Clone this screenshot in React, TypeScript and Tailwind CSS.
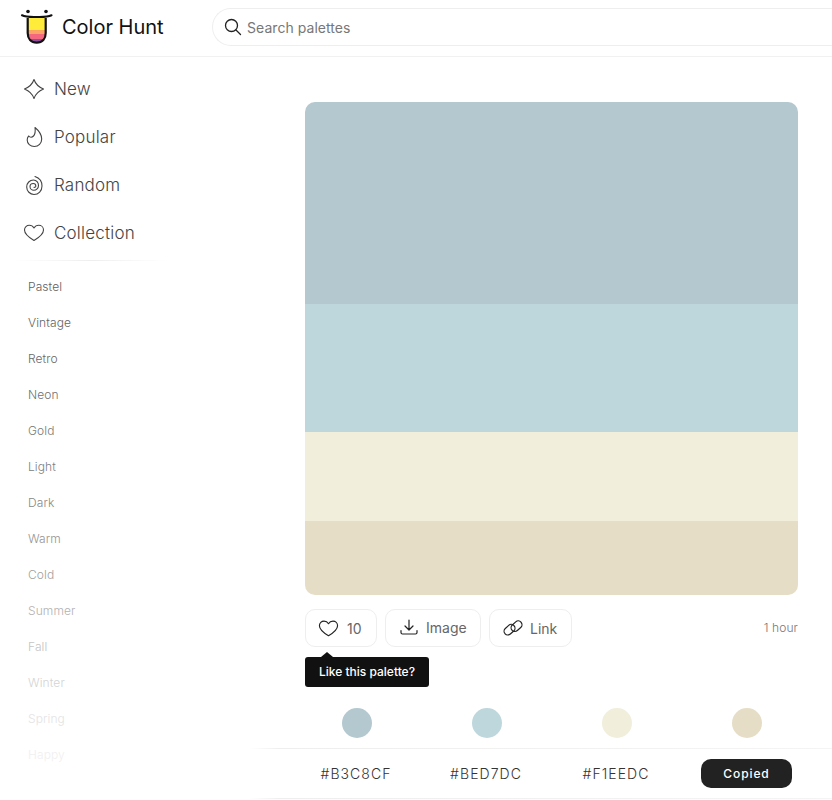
import React from "react";

const Logo = () => (
  <svg width="34" height="36" viewBox="0 0 34 36" fill="none">
    <defs>
      <clipPath id="cup"><path d="M7.700 9 H25.700 V24 C25.700 30 22.400 33.700 16.700 33.700 C11 33.700 7.700 30 7.700 24 Z" /></clipPath>
    </defs>
    <g clipPath="url(#cup)">
      <rect x="5" y="9" width="24" height="12" fill="#ffec3a" />
      <rect x="5" y="21" width="24" height="4" fill="#fda564" />
      <rect x="5" y="25" width="24" height="5" fill="#f4677f" />
      <rect x="5" y="30" width="24" height="5" fill="#8b4fa0" />
    </g>
    <path d="M7.700 9 V24 C7.700 30 11 33.700 16.700 33.700 C22.400 33.700 25.700 30 25.700 24 V9" stroke="#111111" strokeWidth="2.200" />
    <path d="M2 6.300 C6 8.300 10 8 16.700 8 C23.400 8 27.500 8.300 31.500 6.300" stroke="#111111" strokeWidth="2.200" strokeLinecap="round" />
    <circle cx="8" cy="2.500" r="1.800" fill="#111111" />
    <circle cx="26" cy="2.500" r="1.800" fill="#111111" />
  </svg>
);

const Star = () => (
  <svg width="22" height="22" viewBox="0 0 22 22" fill="none" stroke="#444444" strokeWidth="1.100" strokeLinejoin="round">
    <path d="M11 1.500 C12.500 6 15.500 9 20.500 11 C15.500 13 12.500 16 11 20.500 C9.500 16 6.500 13 1.500 11 C6.500 9 9.500 6 11 1.500 Z" />
  </svg>
);
const Flame = () => (
  <svg width="22" height="22" viewBox="0 0 22 22" fill="none" stroke="#444444" strokeWidth="1.100" strokeLinecap="round" strokeLinejoin="round">
    <path d="M12 1.500 C15 4 18.700 8 18.700 13 C18.700 17.500 15.500 20.500 11.300 20.500 C7.300 20.500 4.200 17.700 4.200 14 C4.200 12.500 4.700 11 5.700 10 C7 11.700 9 11.500 10.500 10 C12 8.500 12.500 5 12 1.500 Z" />
  </svg>
);
const Spiral = () => (
  <svg width="22" height="22" viewBox="0 0 22 22" fill="none" stroke="#444444" strokeWidth="1.100" strokeLinecap="round">
    <path d="M12 2.500 C16.500 4 19 8 19 12 C19 17 15.500 20.500 11 20.500 C7 20.500 3.700 17 3.700 13 C3.700 9 6.700 6 10.500 6 C13.500 6 15.500 8.700 15.500 11.500 C15.500 14.200 13.300 16.300 10.800 16.300 C8.700 16.300 7 14.500 7 12.500 C7 10.700 8.500 9.500 10.300 9.500 C11.800 9.500 12.800 10.700 12.800 12 C12.800 13 12 13.500 11 13.300" />
  </svg>
);
const Heart = ({ size = 22, color = "#444444", sw = 1.100 }: { size?: number; color?: string; sw?: number }) => (
  <svg width={size} height={size} viewBox="0 0 22 22" fill="none" stroke={color} strokeWidth={sw} strokeLinejoin="round">
    <path d="M11 18.500 C6 15.500 1.500 12 1.500 8 C1.500 5.200 3.700 3.300 6.300 3.300 C8.300 3.300 10 4.300 11 6 C12 4.300 13.700 3.300 15.700 3.300 C18.300 3.300 20.500 5.200 20.500 8 C20.500 12 16 15.500 11 18.500 Z" />
  </svg>
);
const Download = () => (
  <svg width="18" height="18" viewBox="0 0 18 18" fill="none" stroke="#222222" strokeWidth="1.200" strokeLinecap="round" strokeLinejoin="round">
    <path d="M9 1 V10.500 M5 7 L9 11 L13 7" />
    <path d="M1 11.500 V13.500 C1 14.500 1.500 15 2.500 15 H15.500 C16.500 15 17 14.500 17 13.500 V11.500" />
  </svg>
);
const Chain = () => (
  <svg width="20" height="20" viewBox="0 0 20 20" fill="none" stroke="#222222" strokeWidth="1.200">
    <rect x="0.500" y="8" width="12" height="7.500" rx="3.700" transform="rotate(-42 6.500 11.700)" />
    <rect x="7.500" y="4.500" width="12" height="7.500" rx="3.700" transform="rotate(-42 13.500 8.200)" />
  </svg>
);
const SearchIcon = () => (
  <svg width="18" height="18" viewBox="0 0 18 18" fill="none" stroke="#222222" strokeWidth="1.300" strokeLinecap="round">
    <circle cx="7.500" cy="7.500" r="6" />
    <path d="M12 12 L16.500 16.500" />
  </svg>
);

const nav = [
  { label: "New", icon: <Star /> },
  { label: "Popular", icon: <Flame /> },
  { label: "Random", icon: <Spiral /> },
  { label: "Collection", icon: <Heart /> },
];

const tags = [
  { label: "Pastel", cls: "text-[#606060]" },
  { label: "Vintage", cls: "text-[#646464]" },
  { label: "Retro", cls: "text-[#686868]" },
  { label: "Neon", cls: "text-[#707070]" },
  { label: "Gold", cls: "text-[#787878]" },
  { label: "Light", cls: "text-[#808080]" },
  { label: "Dark", cls: "text-[#888888]" },
  { label: "Warm", cls: "text-[#949494]" },
  { label: "Cold", cls: "text-[#a0a0a0]" },
  { label: "Summer", cls: "text-[#b2b2b2]" },
  { label: "Fall", cls: "text-[#c4c4c4]" },
  { label: "Winter", cls: "text-[#d4d4d4]" },
  { label: "Spring", cls: "text-[#e4e4e4]" },
  { label: "Happy", cls: "text-[#f0f0f0]" },
];

const swatches = [
  { hex: "#B3C8CF", cls: "bg-[#b3c8cf]" },
  { hex: "#BED7DC", cls: "bg-[#bed7dc]" },
  { hex: "#F1EEDC", cls: "bg-[#f1eedc]" },
  { hex: "#E5DDC5", cls: "bg-[#e5ddc5]" },
];

const btn = "flex h-[38px] items-center rounded-[10px] border border-[#eeeeee] bg-white text-[14px] text-[#666666]";

export default function App() {
  return (
    <div className="flex h-[800px] w-[832px] flex-col overflow-hidden bg-white font-['Inter',sans-serif]">
      <header className="flex h-[57px] shrink-0 items-center border-b border-[#f1f1f1]">
        <div className="mb-[3px] ml-[20px]"><Logo /></div>
        <span className="mb-[2px] ml-[8px] w-[150px] text-[20px] text-[#111111]">Color Hunt</span>
        <div className="mb-[2px] flex h-[38px] flex-1 items-center rounded-l-full border border-r-0 border-[#eeeeee] pl-[11px]">
          <SearchIcon />
          <span className="ml-[5px] text-[14px] tracking-[0.050px] text-[#777777]">Search palettes</span>
        </div>
      </header>

      <div className="flex min-h-0 flex-1">
        <aside className="w-[250px] shrink-0 pt-[8px]">
          <nav className="flex flex-col">
            {nav.map((n) => (
              <div key={n.label} className="flex h-[48px] items-center pl-[23px]">
                {n.icon}
                <span className="ml-[9px] mt-[2px] text-[17px] font-light tracking-[0.200px] text-[#444444]">{n.label}</span>
              </div>
            ))}
          </nav>
          <div className="ml-[15px] mt-[3px] h-px w-[152px] bg-gradient-to-r from-transparent via-[#eeeeee] to-transparent" />
          <ul className="mt-[8px] flex flex-col">
            {tags.map((t) => (
              <li key={t.label} className={`flex h-[36px] items-center pl-[28px] text-[12px] font-light tracking-[0.100px] ${t.cls}`}>{t.label}</li>
            ))}
          </ul>
        </aside>

        <main className="flex min-w-0 flex-1 flex-col">
          <div className="ml-[55px] mt-[45px] w-[493px]">
            <div className="flex h-[493px] flex-col overflow-hidden rounded-[10px]">
              <div className="h-[202px] bg-[#b3c8cf]" />
              <div className="h-[128px] bg-[#bed7dc]" />
              <div className="h-[89px] bg-[#f1eedc]" />
              <div className="h-[74px] bg-[#e5ddc5]" />
            </div>
            <div className="relative mt-[14px] flex items-center gap-[8px]">
              <div className={`${btn} w-[72px] pl-[12px]`}>
                <Heart size={21} color="#222222" sw={1.200} />
                <span className="ml-[8px]">10</span>
              </div>
              <div className={`${btn} w-[96px] pl-[14px]`}>
                <Download />
                <span className="ml-[8px] mt-[-1px]">Image</span>
              </div>
              <div className={`${btn} w-[83px] pl-[13px]`}>
                <Chain />
                <span className="ml-[7px]">Link</span>
              </div>
              <span className="ml-auto text-[12px] font-light tracking-[0.100px] text-[#777777]">1 hour</span>
              <div className="absolute left-0 top-[48px] flex h-[30px] w-[124px] items-center justify-center rounded-[3px] bg-[#111111] text-[12px] font-medium text-white">
                Like this palette?
                <div className="absolute left-[16px] top-[-5px] h-0 w-0 border-x-[6px] border-b-[5px] border-x-transparent border-b-[#111111]" />
              </div>
            </div>
          </div>

          <div className="ml-[42px] mt-[61px] grid w-[520px] grid-cols-4">
            {swatches.map((s) => (
              <div key={s.hex} className="flex justify-center">
                <div className={`h-[30px] w-[30px] rounded-full ${s.cls}`} />
              </div>
            ))}
          </div>
          <div className="mt-[10px] h-px bg-gradient-to-r from-transparent via-[#eeeeee] via-5% to-[#f4f4f4]" />
          <div className="ml-[41px] grid h-[49px] w-[520px] grid-cols-4 items-center">
            {swatches.slice(0, 3).map((s) => (
              <div key={s.hex} className="text-center text-[14px] font-light tracking-[1.050px] text-[#333333]">{s.hex}</div>
            ))}
            <div className="flex justify-center">
              <div className="ml-[1px] flex h-[29px] w-[91px] items-center justify-center rounded-[10px] bg-[#222222] text-[12px] font-medium tracking-[0.900px] text-white">Copied</div>
            </div>
          </div>
          <div className="h-px bg-gradient-to-r from-transparent via-[#eeeeee] via-5% to-[#f4f4f4]" />
        </main>
      </div>
    </div>
  );
}
